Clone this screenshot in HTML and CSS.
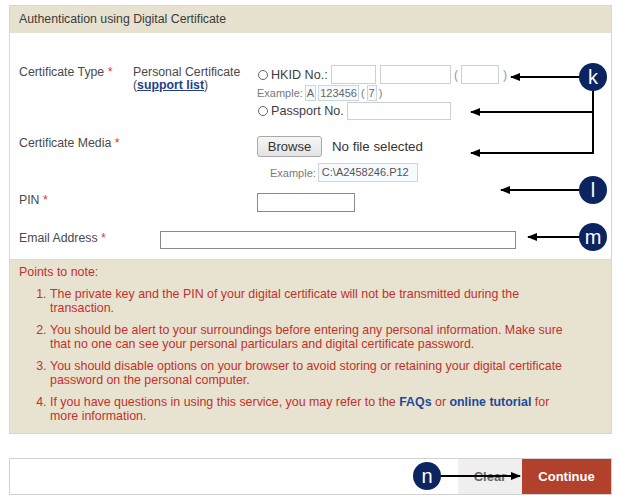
FILE: index.html
```html
<!DOCTYPE html>
<html lang="en">
<head>
<meta charset="utf-8">
<title>Authentication using Digital Certificate</title>
<link rel="stylesheet" href="styles.css">
</head>
<body>
<div class="page">
  <section class="panel">
    <div class="panel-head">Authentication using Digital Certificate</div>
    <div class="panel-body">
      <div class="row row-type">
        <div class="label">Certificate Type <span class="req">*</span></div>
        <div class="sublabel">Personal Certificate<br>(<a class="link" href="#">support list</a>)</div>
        <div class="fields">
          <div class="line">
            <span class="radio"></span><span class="rlabel hkid">HKID No.:</span>
            <span class="in in-a"></span><span class="in in-b"></span><span class="paren">(</span><span class="in in-c"></span><span class="paren paren-r">)</span>
          </div>
          <div class="example ex-1">Example: <span class="exbox">A</span><span class="exbox">123456</span><span class="expar">(</span><span class="exbox">7</span><span class="expar">)</span></div>
          <div class="line line-pass">
            <span class="radio"></span><span class="rlabel pass">Passport No.</span><span class="in in-pass"></span>
          </div>
        </div>
      </div>

      <div class="row row-media">
        <div class="label label-wide">Certificate Media <span class="req">*</span></div>
        <div class="fields">
          <div class="file-line"><span class="browse">Browse</span><span class="nofile">No file selected</span></div>
          <div class="example ex-2">Example: <span class="exbox exbox-path">C:\A2458246.P12</span></div>
        </div>
      </div>

      <div class="row row-pin">
        <div class="label label-wide">PIN <span class="req">*</span></div>
        <div class="fields"><span class="in in-pin"></span></div>
      </div>

      <div class="row row-email">
        <div class="label label-email">Email Address <span class="req">*</span></div>
        <span class="in in-email"></span>
      </div>
    </div>

    <div class="notes">
      <div class="notes-title">Points to note:</div>
      <ol class="notes-list">
        <li>The private key and the PIN of your digital certificate will not be transmitted during the transaction.</li>
        <li>You should be alert to your surroundings before entering any personal information. Make sure that no one can see your personal particulars and digital certificate password.</li>
        <li>You should disable options on your browser to avoid storing or retaining your digital certificate password on the personal computer.</li>
        <li>If you have questions in using this service, you may refer to the <a class="nlink" href="#">FAQs</a> or <a class="nlink" href="#">online tutorial</a> for more information.</li>
      </ol>
    </div>
  </section>

  <div class="actions">
    <span class="btn btn-clear">Clear</span><span class="btn btn-continue">Continue</span>
  </div>
</div>

<svg class="annot" width="620" height="500" viewBox="0 0 620 500" aria-hidden="true">
  <defs>
    <marker id="ah" markerWidth="10" markerHeight="8" refX="9" refY="4" orient="auto" markerUnits="userSpaceOnUse">
      <path d="M0 0 L10 4 L0 8 Z" fill="#000"/>
    </marker>
  </defs>
  <g stroke="#000" stroke-width="2" fill="none">
    <line x1="580" y1="77" x2="511" y2="77" marker-end="url(#ah)"/>
    <polyline points="593,90 593,153"/>
    <line x1="594" y1="112" x2="471" y2="112" marker-end="url(#ah)"/>
    <line x1="594" y1="153" x2="471" y2="153" marker-end="url(#ah)"/>
    <line x1="580" y1="190" x2="501" y2="190" marker-end="url(#ah)"/>
    <line x1="580" y1="237" x2="528" y2="237" marker-end="url(#ah)"/>
    <line x1="440" y1="476" x2="520" y2="476" marker-end="url(#ah)"/>
  </g>
  <g class="badges">
    <circle cx="593" cy="77" r="14"/>
    <circle cx="593" cy="190" r="14"/>
    <circle cx="593" cy="237" r="14"/>
    <circle cx="427" cy="476" r="14"/>
  </g>
  <g class="badge-text">
    <text x="593" y="84">k</text>
    <text x="593" y="197">l</text>
    <text x="593" y="244">m</text>
    <text x="427" y="483">n</text>
  </g>
</svg>
</body>
</html>
```

FILE: styles.css
```css
* { box-sizing: border-box; }

body {
  margin: 0;
  position: relative;
  width: 620px;
  height: 500px;
  overflow: hidden;
  background: #fff;
  font-family: "Liberation Sans", Arial, sans-serif;
  font-size: 12.3px;
  color: #4a4a4a;
}

.page {
  padding: 5px 8px 0 9px;
}

.panel {
  border: 1px solid #d6d6d6;
}

.panel-head {
  height: 27px;
  line-height: 26px;
  padding-left: 9px;
  background: #e7e2cf;
  color: #3a3a3a;
}

.panel-body {
  padding: 32px 9px 10px;
  background: #fff;
}

.row {
  display: flex;
  align-items: flex-start;
}

.label {
  flex: none;
  width: 114px;
  line-height: 14px;
}

.label-wide { width: 238px; }
.label-email { width: 141px; }

.req { color: #d33; }

.sublabel {
  flex: none;
  width: 124px;
  line-height: 13px;
  padding-top: 1px;
}

.link {
  color: #1d3f8f;
  font-weight: bold;
  text-decoration: underline;
}

.fields {
  display: flex;
  flex-direction: column;
}

.line {
  display: flex;
  align-items: center;
  height: 19px;
}

.radio {
  flex: none;
  width: 10px;
  height: 10px;
  margin: 0 3px 0 1px;
  border: 1px solid #666;
  border-radius: 50%;
}

.rlabel {
  color: #3d3d3d;
  font-size: 12.6px;
}

.hkid { width: 60px; }
.pass { width: 76px; }

.in {
  display: block;
  flex: none;
  height: 19px;
  border: 1px solid #cfcfcf;
  background: #fff;
}

.in-a { width: 45px; }
.in-b { width: 71px; margin-left: 4px; }
.in-c { width: 38px; }
.in-pass { width: 104px; height: 18px; }

.paren {
  color: #999;
  width: 10px;
  text-align: center;
}
.paren-r { width: 12px; }

.example {
  display: flex;
  align-items: center;
  color: #7a7a7a;
  font-size: 11px;
}

.ex-1 { height: 17px; }

.exbox {
  display: inline-block;
  height: 16px;
  line-height: 14px;
  padding: 0 1px;
  margin-left: 2px;
  border: 1px solid #c6d8e6;
  background: #f7fafc;
  color: #666;
}

.expar { margin-left: 2px; }

.row-media { margin-top: 16px; }

.file-line {
  display: flex;
  align-items: center;
  height: 21px;
}

.browse {
  display: flex;
  align-items: center;
  justify-content: center;
  width: 65px;
  height: 21px;
  border: 1px solid #a9a9a9;
  border-radius: 3px;
  background: linear-gradient(#f6f6f6, #e3e3e3);
  color: #333;
  font-size: 13px;
}

.nofile {
  margin-left: 10px;
  color: #333;
  font-size: 13.3px;
}

.ex-2 {
  margin-top: 6px;
  padding-left: 13px;
  height: 19px;
}

.exbox-path {
  width: 100px;
  height: 19px;
  line-height: 17px;
  padding-left: 3px;
  color: #555;
}

.row-pin { margin-top: 11px; }

.in-pin {
  width: 98px;
  border-color: #8a8a8a;
}

.row-email { margin-top: 19px; }

.in-email {
  width: 356px;
  height: 18px;
  border-color: #8a8a8a;
}

.notes {
  border-top: 1px solid #e0dccb;
  background: #e8e3d1;
  padding: 5px 39px 10px 9px;
  color: #c4302a;
  font-size: 12.4px;
  line-height: 14px;
}

.notes-list {
  margin: 8px 0 0;
  padding-left: 31px;
}

.notes-list li + li { margin-top: 8px; }

.nlink {
  color: #1f4a94;
  font-weight: bold;
  text-decoration: none;
}

.actions {
  display: flex;
  justify-content: flex-end;
  margin-top: 24px;
  height: 37px;
  border: 1px solid #d2d2d2;
  background: #fff;
}

.btn {
  display: flex;
  align-items: center;
  justify-content: center;
  height: 100%;
  font-size: 13px;
  font-weight: bold;
}

.btn-clear {
  width: 64px;
  background: #efefef;
  color: #666;
}

.btn-continue {
  width: 89px;
  background: #b1412b;
  color: #fff;
}

.annot {
  position: absolute;
  top: 0;
  left: 0;
  pointer-events: none;
}

.badges circle { fill: #0c245f; }

.badge-text text {
  fill: #fff;
  font-family: "Liberation Sans", Arial, sans-serif;
  font-size: 20px;
  text-anchor: middle;
}
```
